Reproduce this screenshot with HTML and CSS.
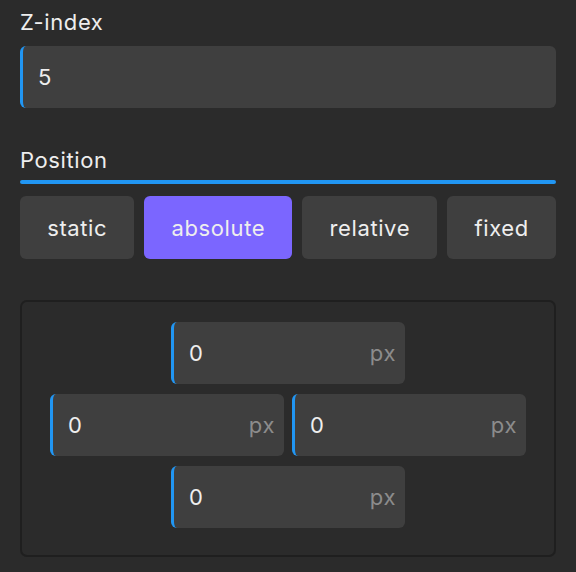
FILE: index.html
```html
<!DOCTYPE html>
<html lang="en">
<head>
  <meta charset="UTF-8" />
  <title>Layout panel</title>
  <link rel="stylesheet" href="styles.css">
</head>
<body>
  <div class="panel">
    <div class="field">
      <div class="label">Z-index</div>
      <div class="input"><span class="value">5</span></div>
    </div>

    <div class="section">
      <div class="section-title">Position</div>
      <div class="segmented">
        <button class="seg-btn">static</button>
        <button class="seg-btn active">absolute</button>
        <button class="seg-btn">relative</button>
        <button class="seg-btn">fixed</button>
      </div>
    </div>

    <div class="offsets">
      <div class="offset-row">
        <div class="input small"><span class="value">0</span><span class="unit">px</span></div>
      </div>
      <div class="offset-row">
        <div class="input small"><span class="value">0</span><span class="unit">px</span></div>
        <div class="input small"><span class="value">0</span><span class="unit">px</span></div>
      </div>
      <div class="offset-row">
        <div class="input small"><span class="value">0</span><span class="unit">px</span></div>
      </div>
    </div>
  </div>
</body>
</html>
```

FILE: styles.css
```css
:root {
  --bg-color: #2b2b2b;
  --field-bg: #3f3f3f;
  --accent: #2196f3;
  --active: #7b66ff;
  --text-color: #eeeeee;
  --muted: #8c8c8c;
}

* {
  margin: 0;
  padding: 0;
  box-sizing: border-box;
  font-family: 'Inter', 'Noto Sans', sans-serif;
  letter-spacing: 0.6px;
}

body {
  background-color: var(--bg-color);
  color: var(--text-color);
  overflow: hidden;
}

.panel {
  padding: 8px 20px 0;
  display: flex;
  flex-direction: column;
}

.label {
  font-size: 22px;
  line-height: 28px;
}

.input {
  height: 62px;
  margin-top: 10px;
  display: flex;
  align-items: center;
  justify-content: space-between;
  background: var(--field-bg);
  border-left: 3px solid var(--accent);
  border-radius: 6px;
  padding: 0 9px 0 15px;
  font-size: 22px;
}

.unit {
  color: var(--muted);
}

.section {
  margin-top: 38px;
}

.section-title {
  font-size: 22px;
  line-height: 28px;
}

.section-title::after {
  content: '';
  display: block;
  height: 4px;
  margin-top: 6px;
  border-radius: 2px;
  background: var(--accent);
}

.segmented {
  display: flex;
  gap: 10px;
  margin-top: 12px;
}

.seg-btn {
  flex: 1 1 auto;
  height: 63px;
  padding: 0 20px;
  border: none;
  border-radius: 6px;
  background: var(--field-bg);
  color: var(--text-color);
  font-size: 22px;
  cursor: pointer;
}

.seg-btn.active {
  background: var(--active);
}

.offsets {
  margin-top: 41px;
  border: 2px solid #1f1f1f;
  border-radius: 7px;
  padding: 20px 0 27px;
  display: flex;
  flex-direction: column;
  gap: 10px;
}

.offset-row {
  display: flex;
  justify-content: center;
  gap: 8px;
}

.input.small {
  width: 234px;
  margin-top: 0;
}
```
